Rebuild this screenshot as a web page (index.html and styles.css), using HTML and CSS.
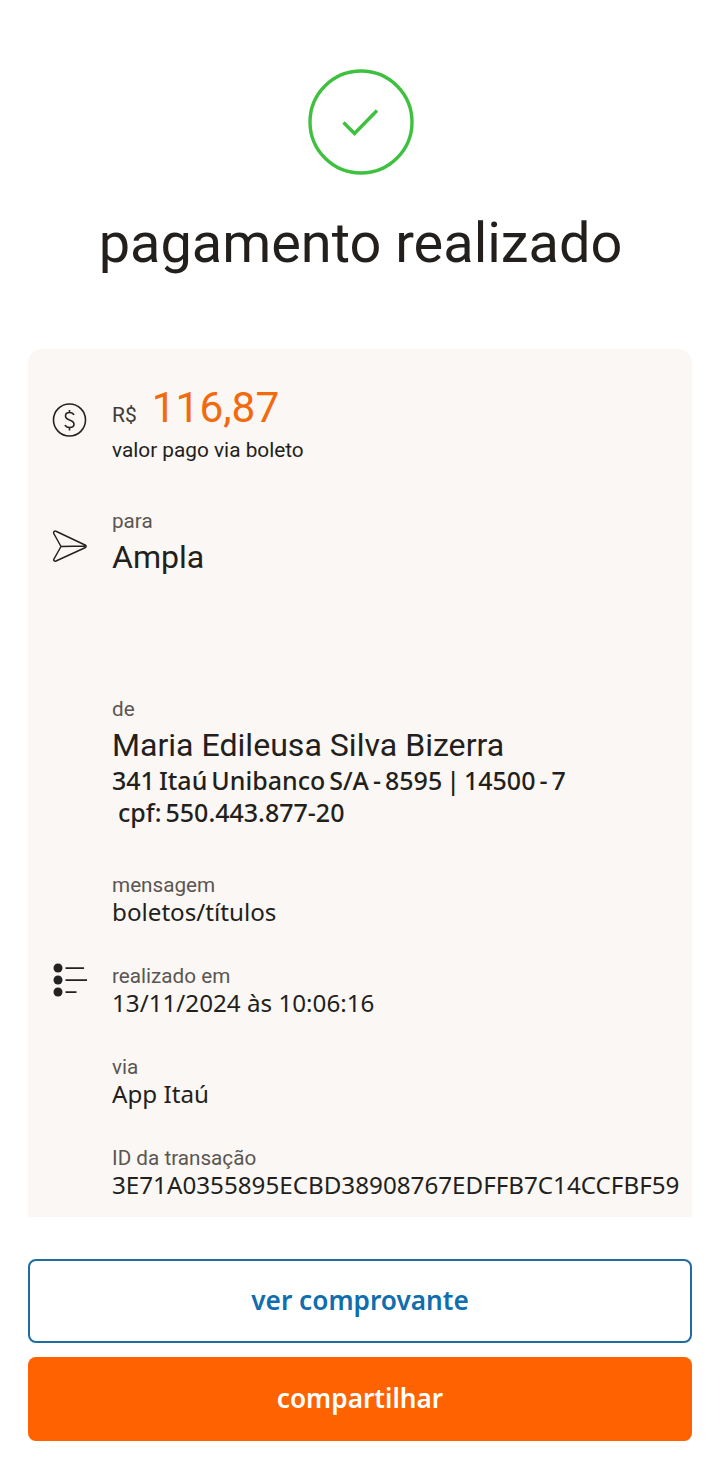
FILE: index.html
```html
<!DOCTYPE html>
<html lang="pt-BR">
<head>
<meta charset="utf-8">
<title>pagamento realizado</title>
<link rel="stylesheet" href="styles.css">
</head>
<body>
<main class="page">
  <header class="hero">
    <svg class="hero-icon" width="108" height="108" viewBox="0 0 108 108" fill="none">
      <circle cx="54" cy="54" r="51" stroke="#3fc140" stroke-width="3.4"/>
      <path d="M36.500 54.500L47.500 65.500L70 42.500" stroke="#3fc140" stroke-width="3.4"/>
    </svg>
    <h1 class="title">pagamento realizado</h1>
  </header>
  <section class="card">
    <div class="row row-amount">
      <svg class="icon" width="36" height="36" viewBox="0 0 36 36" fill="none" stroke="#222" stroke-width="1.600">
        <circle cx="17.500" cy="18" r="16"/>
        <path d="M22 13C21 11 19.500 10.500 17.500 10.500C15 10.500 13.500 12 13.500 14C13.500 16.500 15.500 17.300 17.500 18C20 18.800 22 19.800 22 22.200C22 24.300 20.300 25.500 17.500 25.500C15.300 25.500 13.800 24.800 13 23M17.500 8V10.500M17.500 25.500V28.500"/>
      </svg>
      <div class="body">
        <p class="amount"><span class="currency">R$</span><span class="value">116,87</span></p>
        <p class="note">valor pago via boleto</p>
      </div>
    </div>
    <div class="row row-to">
      <svg class="icon" width="36" height="36" viewBox="0 0 36 36" fill="none" stroke="#222" stroke-width="1.500" stroke-linejoin="round">
        <path d="M1.500 4C1.500 2.500 2.800 1.700 4 2.300L33 16C34.500 16.700 34.500 18 33 18.700L4 32C2.800 32.500 1.500 31.800 1.700 30.500L9 17.500L1.500 4ZM9 17.500L33 17"/>
      </svg>
      <div class="body">
        <p class="label">para</p>
        <p class="name">Ampla</p>
      </div>
    </div>
    <div class="row row-from">
      <div class="spacer"></div>
      <div class="body">
        <p class="label">de</p>
        <p class="name">Maria Edileusa Silva Bizerra</p>
        <p class="account">341 Itaú Unibanco S/A - 8595 | 14500 - 7</p>
        <p class="account account-cpf">cpf: 550.443.877-20</p>
      </div>
    </div>
    <div class="row row-msg">
      <div class="spacer"></div>
      <div class="body">
        <p class="label">mensagem</p>
        <p class="detail">boletos/títulos</p>
      </div>
    </div>
    <div class="row row-detail">
      <svg class="icon" width="36" height="36" viewBox="0 0 36 36" fill="#222" stroke="none">
        <circle cx="6" cy="5" r="4.500"/>
        <circle cx="6" cy="17" r="4.500"/>
        <circle cx="6" cy="29" r="4.500"/>
        <path d="M13.500 4.200H32V6H13.500ZM13.500 16.200H35V18H13.500ZM13.500 28.200H24.500V30H13.500Z"/>
      </svg>
      <div class="body">
        <p class="label">realizado em</p>
        <p class="detail">13/11/2024 às 10:06:16</p>
      </div>
    </div>
    <div class="row row-detail">
      <div class="spacer"></div>
      <div class="body">
        <p class="label">via</p>
        <p class="detail">App Itaú</p>
      </div>
    </div>
    <div class="row row-detail">
      <div class="spacer"></div>
      <div class="body">
        <p class="label">ID da transação</p>
        <p class="detail">3E71A0355895ECBD38908767EDFFB7C14CCFBF59</p>
      </div>
    </div>
  </section>
  <footer class="actions">
    <button class="btn btn-outline" type="button">ver comprovante</button>
    <button class="btn btn-solid" type="button">compartilhar</button>
  </footer>
</main>
</body>
</html>
```
FILE: styles.css
```css
* { box-sizing: border-box; }
html, body { margin: 0; padding: 0; background: #fff; }
p, h1 { margin: 0; }
.page {
  width: 720px;
  height: 1469px;
  font-family: Roboto, "Liberation Sans", sans-serif;
  color: #231f1c;
  overflow: hidden;
}
.hero {
  display: flex;
  flex-direction: column;
  align-items: center;
  padding-top: 68px;
  padding-left: 1px;
  height: 349px;
}
.hero-icon { display: block; }
.title {
  margin-top: 32px;
  font-size: 55.900px;
  line-height: 70px;
  font-weight: 400;
  text-align: center;
  white-space: nowrap;
}
.card {
  margin: 0 28px;
  height: 868px;
  padding-top: 34px;
  background: #fbf7f4;
  border-radius: 14px 14px 0 0;
}
.row {
  display: flex;
  gap: 24px;
  padding-left: 24px;
}
.icon, .spacer { flex: 0 0 36px; width: 36px; }
.label { font-size: 20.700px; line-height: 27px; color: #5a5653; }
.name { font-size: 32.100px; line-height: 44px; }
.detail {
  font-family: "Noto Sans", sans-serif;
  font-size: 24.200px;
  line-height: 28px;
  margin: -1px 0 1px;
  white-space: nowrap;
}
.row-amount .icon { margin-top: 19px; }
.amount { display: flex; align-items: flex-end; height: 50px; line-height: 50px; }
.currency { font-size: 21px; color: #3d3a37; margin-right: 15px; line-height: 36px; }
.value { font-size: 42.400px; color: #f26a0f; }
.note { font-size: 20.800px; line-height: 28px; margin-top: 3px; }
.row-to { margin-top: 44px; }
.row-to .icon { margin-top: 21px; }
.row-from { margin-top: 117px; }
.account {
  font-family: "Noto Sans", sans-serif;
  font-weight: 500;
  font-size: 25px;
  line-height: 32px;
  word-spacing: -2.500px;
  position: relative;
  top: -3px;
}
.account-cpf { padding-left: 6px; }
.row-msg { margin-top: 41px; }
.row-detail { margin-top: 36px; }
.row-detail .icon { margin-top: 0; }
.actions {
  display: flex;
  flex-direction: column;
  gap: 14px;
  margin: 42px 28px 0;
}
.btn {
  display: block;
  width: 100%;
  height: 84px;
  padding: 0 0 3px;
  border-radius: 8px;
  font-family: "Noto Sans", sans-serif;
  font-weight: 600;
  font-size: 26.200px;
  cursor: pointer;
}
.btn-outline { background: #fff; border: 2px solid #1f6d9f; color: #106eaf; }
.btn-solid { background: #ff6200; border: 0; color: #fff; }
```
